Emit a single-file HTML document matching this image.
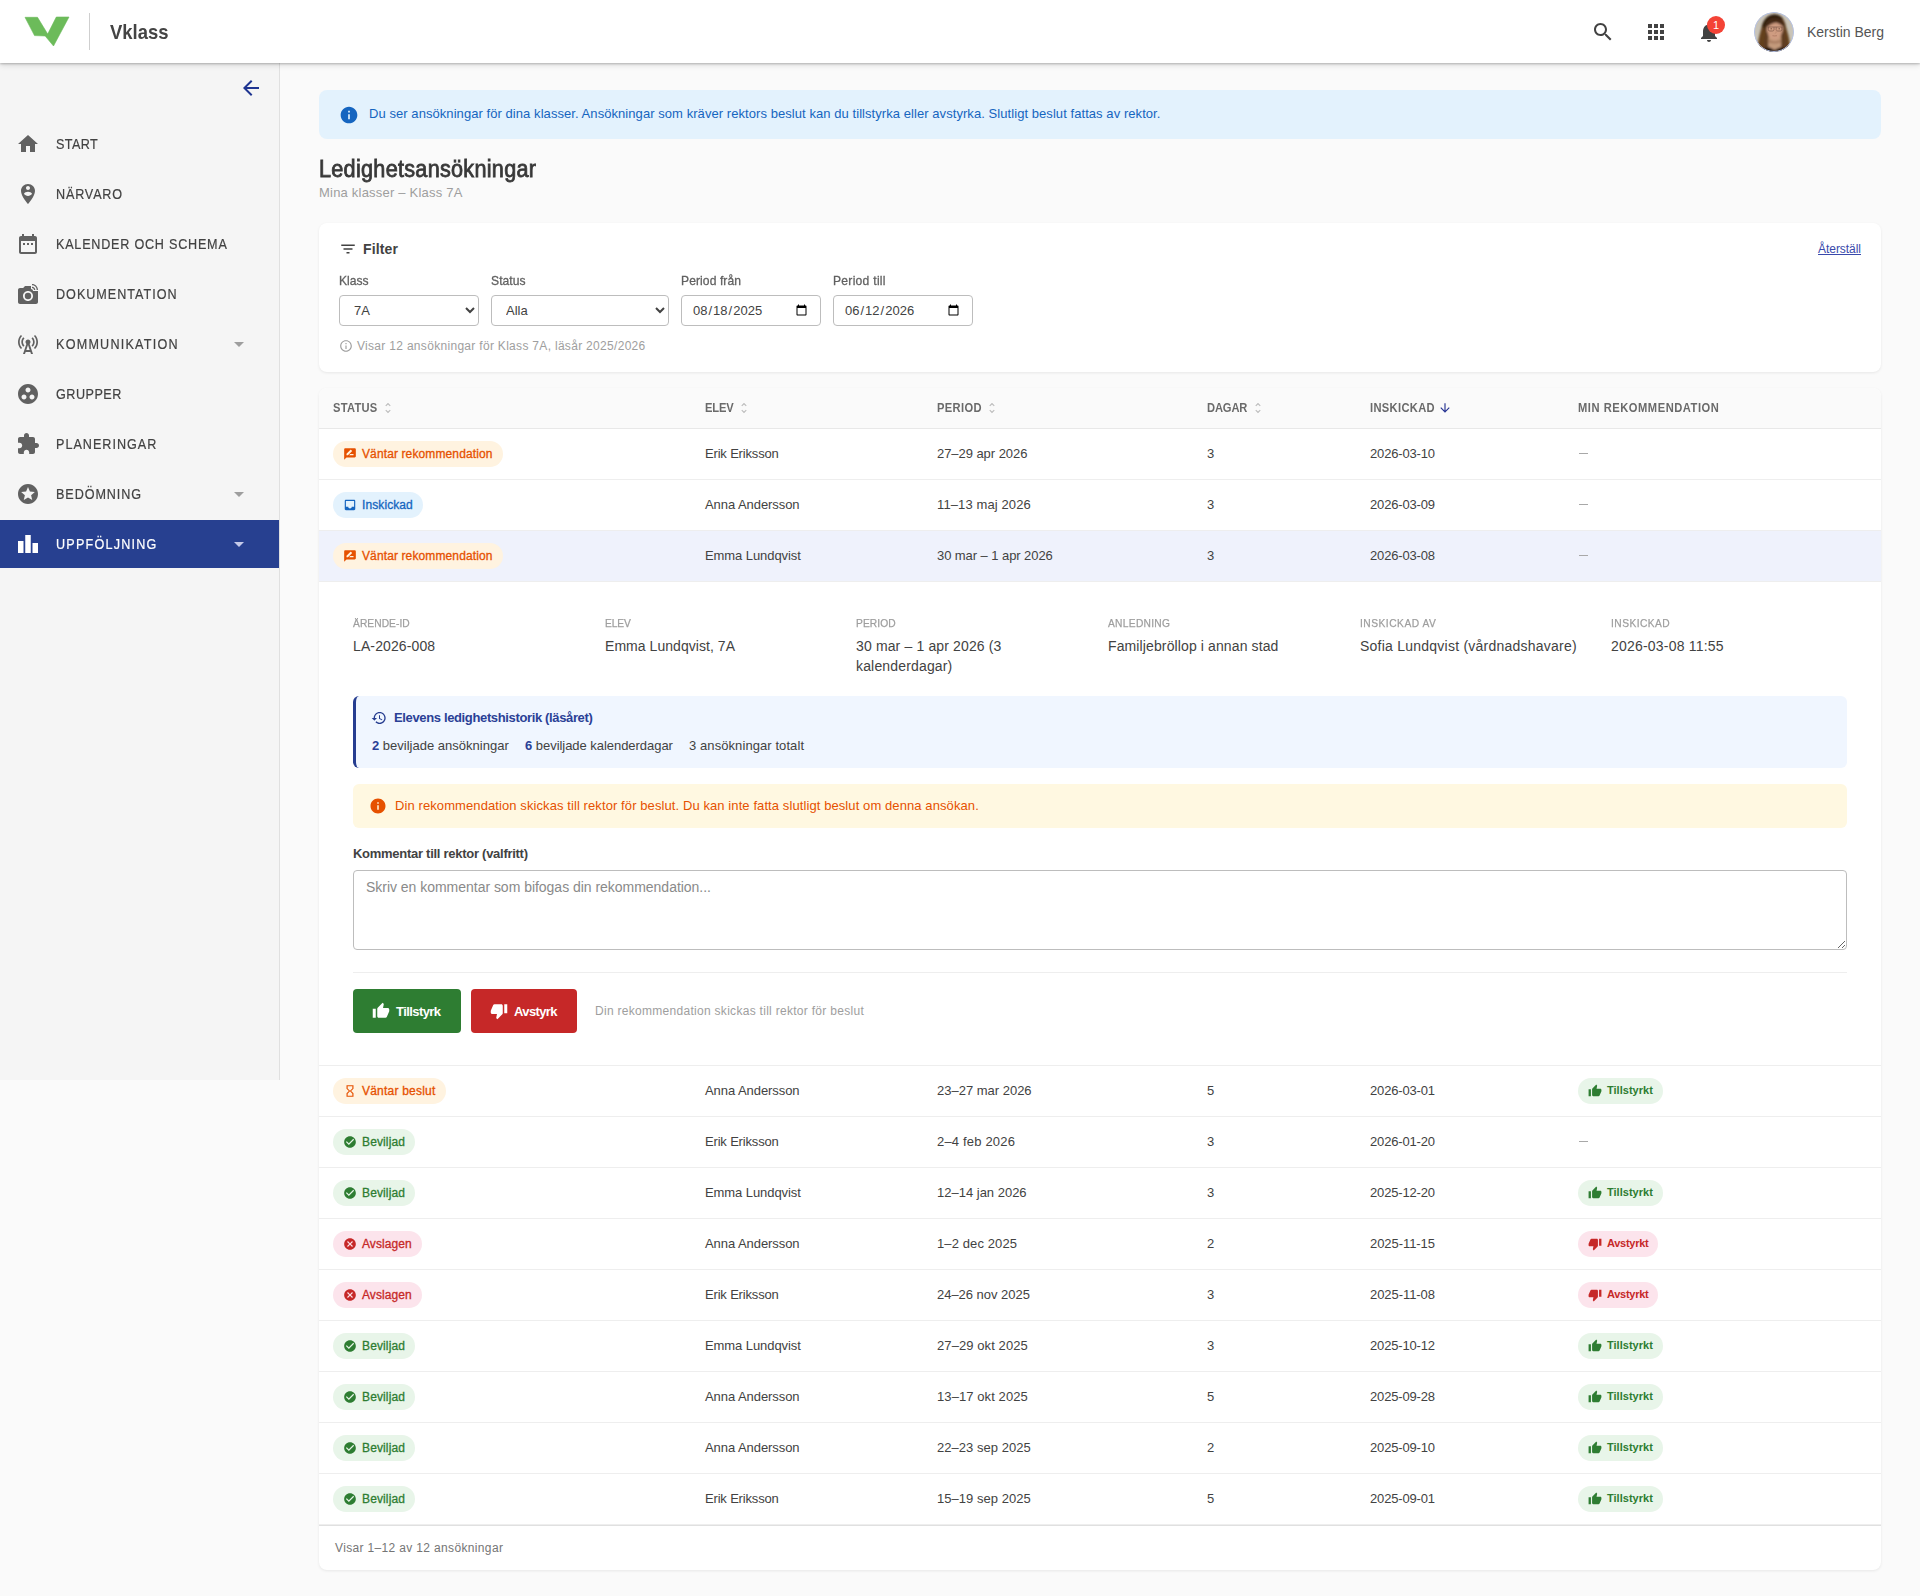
<!DOCTYPE html>
<html lang="sv">
<head>
<meta charset="utf-8">
<title>Ledighetsansökningar</title>
<style>
*{box-sizing:border-box;margin:0;padding:0}
html,body{width:1920px;height:1596px;overflow:hidden}
body{font-family:"Liberation Sans",sans-serif;background:#fafafa;color:#424242;font-size:13px;position:relative}
svg{display:block}
#hdr{position:absolute;left:0;top:0;width:1920px;height:63px;background:#fff;box-shadow:0 1px 2px rgba(0,0,0,.22),0 2px 6px rgba(0,0,0,.13);z-index:5}
#logo{position:absolute;left:0;top:0}
#hdiv{position:absolute;left:89px;top:13px;width:1px;height:37px;background:#cfcfcf}
#brand{position:absolute;left:110px;top:20px;font-size:20.5px;font-weight:bold;color:#444;line-height:24px;white-space:nowrap;transform-origin:0 0;transform:scaleX(.9)}
.hic{position:absolute;top:20px;width:24px;height:24px;fill:#424242}
#badge{position:absolute;left:1707px;top:16px;width:18px;height:18px;border-radius:9px;background:#f44336;color:#fff;font-size:11px;line-height:18px;text-align:center}
#avatar{position:absolute;left:1754px;top:12px;width:40px;height:40px;border-radius:20px;overflow:hidden}
#uname{position:absolute;left:1807px;top:23px;font-size:14px;line-height:18px;color:#555;white-space:nowrap}
#side{position:absolute;left:0;top:63px;width:280px;height:1017px;background:#f5f5f5;border-right:1px solid #e0e0e0}
#back{position:absolute;left:239px;top:13px;width:24px;height:24px;fill:#1f3591}
.mi{position:absolute;left:0;width:279px;height:48px;color:#424242}
.mi svg.ic{position:absolute;left:16px;top:12px;width:24px;height:24px;fill:#616161}
.mi span{position:absolute;left:56px;top:15px;font-size:14px;line-height:18px;white-space:nowrap;-webkit-text-stroke:.2px currentColor}
.mi svg.dd{position:absolute;left:227px;top:12px;width:24px;height:24px;fill:#9e9e9e}
.mi.act{background:#274090;color:#fff}
.mi.act svg.ic{fill:#fff}
.mi.act svg.dd{fill:#c5cae9}
#main{position:absolute;left:319px;top:90px;width:1562px}
#info{height:49px;background:#e3f2fd;border-radius:8px;position:relative;color:#1565c0}
#info svg{position:absolute;left:20px;top:15px;width:20px;height:20px;fill:#1565c0}
#info span{position:absolute;left:50px;top:16px;font-size:13px;line-height:16px;white-space:nowrap}
h1{position:absolute;left:0;top:65px;font-size:23px;line-height:28px;font-weight:normal;color:#383838;-webkit-text-stroke:.8px #383838;white-space:nowrap}
.sub{position:absolute;left:0;top:95px;font-size:13px;line-height:16px;color:#9e9e9e;white-space:nowrap}
.card{background:#fff;border-radius:8px;box-shadow:0 1px 3px rgba(0,0,0,.08)}
#filter{position:absolute;left:0;top:133px;width:1562px;height:149px}
#filter .fh{position:absolute;left:20px;top:16px;height:20px}
#filter .fh svg{position:absolute;left:0;top:1px;width:18px;height:18px;fill:#424242}
#filter .fh span{position:absolute;left:24px;top:0;font-size:14px;line-height:20px;font-weight:bold;color:#424242}
.reset{position:absolute;right:20px;top:19px;font-size:12px;line-height:14px;color:#3949ab;text-decoration:underline;white-space:nowrap}
.fl{position:absolute;top:50px;font-size:13px;line-height:16px;color:#616161;-webkit-text-stroke:.3px #616161;white-space:nowrap}
.fc{position:absolute;top:72px;height:31px;border:1px solid #bdbdbd;border-radius:4px;background:#fff;font-family:"Liberation Sans",sans-serif;font-size:13px;color:#424242;padding:0 10px}
#fnote{position:absolute;left:20px;top:115px;height:16px;color:#9e9e9e;font-size:12px;line-height:16px;white-space:nowrap}
#fnote svg{position:absolute;left:0;top:1px;width:14px;height:14px;fill:#9e9e9e}
#fnote span{position:absolute;left:18px;top:0}
#tbl{position:absolute;left:0;top:298px;width:1562px;height:1182px;overflow:hidden}
.row{position:relative;height:51px;border-bottom:1px solid #eeeeee;width:1562px}
.row.hd{height:41px;background:#fafafa;border-bottom:1px solid #e8e8e8}
.row.sel{background:#eff2fc}
.c{position:absolute;top:0;height:100%;white-space:nowrap}
.row .c{line-height:50px;font-size:13px;color:#424242}
.row.hd .c{line-height:40px;font-size:12px;font-weight:bold;color:#6a6a6a}
.c1{left:14px}.c2{left:386px}.c3{left:618px}.c4{left:888px}.c5{left:1051px}.c6{left:1259px}
.srt{display:inline-block;vertical-align:middle;width:14px;height:14px;fill:#bdbdbd;margin-left:3.3px;margin-top:-1px}
.srt.on{fill:#283593}
.dash{display:inline-block;vertical-align:middle;width:9px;height:1px;background:#a8a8a8;margin-left:1px;margin-top:-3px}
.chip{display:inline-block;vertical-align:middle;height:26px;border-radius:13px;padding:0 10px 0 29px;font-size:12px;line-height:26px;position:relative;margin-top:-1px}
.chip svg{position:absolute;left:10px;top:6px;width:14px;height:14px}
.chip span{display:inline-block;-webkit-text-stroke:.3px currentColor}
.chip.or{background:#fff3e0;color:#e65100}.chip.or svg{fill:#e65100}
.chip.bl{background:#e3f2fd;color:#1565c0}.chip.bl svg{fill:#1565c0}
.chip.gr{background:#e8f5e9;color:#2e7d32}.chip.gr svg{fill:#2e7d32}
.chip.rd{background:#fce4ec;color:#c62828}.chip.rd svg{fill:#c62828}
.chip.sm{font-size:11px;font-weight:bold;line-height:25px}.chip.sm span{-webkit-text-stroke:0}
#det{position:relative;height:484px;border-bottom:1px solid #eeeeee;background:#fff}
.dl{position:absolute;top:34px;font-size:11px;line-height:14px;color:#9e9e9e;-webkit-text-stroke:.25px #9e9e9e;white-space:nowrap}
.dv{position:absolute;top:54px;font-size:14px;line-height:20px;color:#424242;white-space:nowrap}
#hist{position:absolute;left:34px;top:114px;width:1494px;height:72px;background:#f0f6ff;border-left:3px solid #263d90;border-radius:6px}
#hist svg{position:absolute;left:15px;top:14px;width:16px;height:16px;fill:#263d90}
#hist b.t{position:absolute;left:38px;top:14px;font-size:13px;line-height:16px;color:#2a4096;white-space:nowrap}
#hist .s{position:absolute;top:42px;font-size:13px;line-height:16px;color:#424242;white-space:nowrap}
#hist .s b{color:#2a4096}
#warn{position:absolute;left:34px;top:202px;width:1494px;height:44px;background:#fff8e1;border-radius:6px;color:#e65100}
#warn svg{position:absolute;left:16px;top:13px;width:18px;height:18px;fill:#e65100}
#warn span{position:absolute;left:42px;top:14px;font-size:13px;line-height:16px;white-space:nowrap}
.kl{position:absolute;left:34px;top:264px;font-size:13px;line-height:16px;font-weight:bold;color:#424242;white-space:nowrap}
#ta{position:absolute;left:34px;top:288px;width:1494px;height:80px;border:1px solid #bdbdbd;border-radius:4px;padding:7px 12px;font-family:"Liberation Sans",sans-serif;font-size:14px;line-height:18px;color:#424242;background:#fff;resize:vertical}
#ta::placeholder{color:#8a8a8a}
#hr{position:absolute;left:34px;top:390px;width:1494px;height:1px;background:#eeeeee}
.btn{position:absolute;top:407px;height:44px;border-radius:4px;color:#fff;font-size:13px;font-weight:bold;line-height:44px;white-space:nowrap}
.btn svg{position:absolute;left:19px;top:13px;width:18px;height:18px;fill:#fff}
.btn span{position:absolute;left:43px;top:1px}
.hint{position:absolute;left:276px;top:421px;font-size:12px;line-height:16px;color:#9e9e9e;white-space:nowrap}
#foot{position:relative;height:46px;border-top:1px solid #e0e0e0;font-size:12px;line-height:44px;color:#757575;padding-left:16px}
</style>
</head>
<body>
<div id="hdr">
<svg id="logo" width="90" height="63" viewBox="0 0 90 63"><polygon points="25,17.300 37.500,17.300 47.700,34 56.300,17 69,17 53.500,46 45.200,36 34.500,35.600" fill="#6cbb5a" stroke="#6cbb5a" stroke-width=".6" stroke-linejoin="round"/></svg>
<div id="hdiv"></div>
<div id="brand">Vklass</div>
<svg class="hic" style="left:1591px" viewBox="0 0 24 24"><path d="M15.5 14h-.79l-.28-.27C15.41 12.59 16 11.11 16 9.5 16 5.91 13.09 3 9.5 3S3 5.91 3 9.5 5.91 16 9.5 16c1.61 0 3.09-.59 4.23-1.57l.27.28v.79l5 4.99L20.49 19l-4.99-5zm-6 0C7.01 14 5 11.99 5 9.5S7.01 5 9.5 5 14 7.01 14 9.5 11.99 14 9.5 14z"/></svg>
<svg class="hic" style="left:1644px" viewBox="0 0 24 24"><path d="M4 8h4V4H4v4zm6 12h4v-4h-4v4zm-6 0h4v-4H4v4zm0-6h4v-4H4v4zm6 0h4v-4h-4v4zm6-10v4h4V4h-4zm-6 4h4V4h-4v4zm6 6h4v-4h-4v4zm0 6h4v-4h-4v4z"/></svg>
<svg class="hic" style="left:1697px" viewBox="0 0 24 24"><path d="M12 22c1.1 0 2-.9 2-2h-4c0 1.1.89 2 2 2zm6-6v-5c0-3.07-1.64-5.64-4.5-6.32V4c0-.83-.67-1.5-1.5-1.5s-1.500.670-1.500 1.500v.680C7.630 5.360 6 7.920 6 11v5l-2 2v1h16v-1l-2-2z"/></svg>
<div id="badge">1</div>
<div id="avatar"><svg width="40" height="40" viewBox="0 0 40 40"><defs><filter id="bl" x="-20%" y="-20%" width="140%" height="140%"><feGaussianBlur stdDeviation="0.85"/></filter><clipPath id="cc"><circle cx="20" cy="20" r="20"/></clipPath></defs><g clip-path="url(#cc)"><rect width="40" height="40" fill="#c9c4b8"/><g filter="url(#bl)"><path d="M4 42C3 31 5.500 23 7.500 16 8.500 8 14 2.600 20.500 2.600 27 2.600 31 8 32 15c2 7 5 15 3.500 27z" fill="#64401f"/><path d="M8 17C8.500 8 14 2.600 20.500 2.600c4 0 7 2 9 5-4-1-8-1-11 1-4 2-7.500 5-10.500 8.400z" fill="#2b1c0e"/><path d="M14.500 25h12.500l.5 15h-13.500z" fill="#c39a7b"/><path d="M15 27.500q5.700 3.500 11.500 0l0 3q-5.800 2-11.500 0z" fill="#a87c60"/><path d="M12.400 17C12.400 11 16 9 20.700 9 26 9 29.200 11.500 29.200 17 29.200 23 25 28 20.700 28 16.500 28 12.400 23 12.400 17z" fill="#cf9c81"/><path d="M10.500 18C10.500 9 15 5.500 21 5.500c6 0 9.800 3.500 9.800 11-2.500-3-5-4.800-8.500-6-4.300.5-8.500 3-11.800 7.500z" fill="#452a15"/><path d="M12.600 13c-2 8-1.500 15-5 28l7-1c-2.500-6-2.800-13-1.500-19zM29 13c2.500 8 2 16 5.500 28l-7.500-1c2.500-6 3-13 1.500-19z" fill="#5e3d22"/><path d="M13 20c.5 6 1 13-.5 20l2.500-.5c-1.500-6-2-12-1-18zM28.500 20c-.5 6-1 13 .5 20l-2.500-.5c1.500-6 2-12 1-18z" fill="#3a2413"/><path d="M5 42c2-5 7-6.500 11-6.500l4.500 2.500 5-2.500c4 0 9 1.500 10.500 6.500z" fill="#1e0c06"/></g><g opacity=".55"><path d="M13.800 15h14.600M14.300 15v2.500q0 1.500 1.500 1.500h2.700q1.500 0 1.500-1.500V15M22.200 15v2.500q0 1.500 1.500 1.500h2.700q1.500 0 1.500-1.500V15" stroke="#4e342b" stroke-width=".8" fill="none"/><circle cx="17.200" cy="16.700" r=".7" fill="#3a2418"/><circle cx="25.200" cy="16.700" r=".7" fill="#3a2418"/><path d="M18.500 23.700q2.300.5 4.500 0" stroke="#8f5a48" stroke-width=".8" fill="none"/><path d="M21.800 17c.8 2 .6 3.500-.6 4.600" stroke="#a87660" stroke-width=".8" fill="none"/></g></g><circle cx="20" cy="20" r="19.500" fill="none" stroke="#b4c3ea" stroke-width="1"/></svg></div>
<div id="uname">Kerstin Berg</div>
</div>
<div id="side">
<svg id="back" viewBox="0 0 24 24"><path d="M20 11H7.83l5.590-5.590L12 4l-8 8 8 8 1.410-1.410L7.830 13H20v-2z"/></svg>
<div class="mi" style="top:57px"><svg class="ic" viewBox="0 0 24 24"><path d="M10 20v-6h4v6h5v-8h3L12 3 2 12h3v8z"/></svg><span style="letter-spacing:0.462px;display:inline-block;transform-origin:0 50%;transform:scaleX(0.9);margin-right:-4.64px">START</span></div>
<div class="mi" style="top:107px"><svg class="ic" viewBox="0 0 24 24"><path d="M12 2C8.14 2 5 5.14 5 9c0 5.25 7 13 7 13s7-7.75 7-13c0-3.86-3.14-7-7-7zm0 2c1.1 0 2 .9 2 2 0 1.11-.9 2-2 2s-2-.89-2-2c0-1.1.9-2 2-2zm0 10c-1.67 0-3.14-.85-4-2.150.020-1.320 2.670-2.050 4-2.050s3.980.730 4 2.050c-.860 1.300-2.330 2.150-4 2.150z"/></svg><span style="letter-spacing:0.917px;display:inline-block;transform-origin:0 50%;transform:scaleX(0.9);margin-right:-7.34px">NÄRVARO</span></div>
<div class="mi" style="top:157px"><svg class="ic" viewBox="0 0 24 24"><path d="M9 11H7v2h2v-2zm4 0h-2v2h2v-2zm4 0h-2v2h2v-2zm2-7h-1V2h-2v2H8V2H6v2H5c-1.110 0-1.990.900-1.990 2L3 20c0 1.100.890 2 2 2h14c1.100 0 2-.900 2-2V6c0-1.100-.900-2-2-2zm0 16H5V9h14v11z"/></svg><span style="letter-spacing:0.862px;display:inline-block;transform-origin:0 50%;transform:scaleX(0.9);margin-right:-18.98px">KALENDER OCH SCHEMA</span></div>
<div class="mi" style="top:207px"><svg class="ic" viewBox="0 0 24 24"><path d="M12 10.800a3.200 3.200 0 1 0 0 6.400 3.200 3.200 0 1 0 0-6.400zM16 3.330c2.580 0 4.670 2.090 4.670 4.670H22c0-3.310-2.690-6-6-6v1.330M16 6c1.110 0 2 .890 2 2h1.330c0-1.840-1.490-3.330-3.330-3.330V6M17 9c0-1.110-.890-2-2-2V4H9L7.170 6H4c-1.100 0-2 .900-2 2v12c0 1.100.900 2 2 2h16c1.100 0 2-.900 2-2V9h-5zm-5 10c-2.760 0-5-2.240-5-5s2.240-5 5-5 5 2.240 5 5-2.240 5-5 5z"/></svg><span style="letter-spacing:1.099px;display:inline-block;transform-origin:0 50%;transform:scaleX(0.9);margin-right:-13.40px">DOKUMENTATION</span></div>
<div class="mi" style="top:257px"><svg class="ic" viewBox="0 0 24 24"><path d="M7.300 14.700l1.200-1.200c-1-1-1.500-2.300-1.500-3.500 0-1.300.500-2.600 1.500-3.500L7.300 5.300c-1.300 1.300-2 3-2 4.700s.700 3.400 2 4.700zM19.100 2.900l-1.200 1.200c1.600 1.600 2.400 3.800 2.400 5.900 0 2.100-.800 4.300-2.400 5.900l1.200 1.200c2-2 2.900-4.500 2.900-7.100 0-2.600-1-5.100-2.900-7.100zM6.100 4.100L4.900 2.900C3 4.900 2 7.400 2 10c0 2.600 1 5.100 2.900 7.100l1.200-1.200c-1.600-1.600-2.400-3.800-2.400-5.900 0-2.100.800-4.300 2.400-5.900zM16.700 14.700c1.300-1.300 2-3 2-4.700-.100-1.700-.700-3.400-2-4.700l-1.200 1.200c1 1 1.500 2.300 1.500 3.500 0 1.300-.500 2.600-1.500 3.500l1.200 1.200zM14.500 10c0-1.380-1.120-2.500-2.500-2.500S9.500 8.620 9.500 10c0 .760.340 1.420.870 1.880L7 22h2l.670-2h4.670l.660 2h2l-3.370-10.120c.530-.460.870-1.120.870-1.880zm-4.170 8L12 13l1.670 5h-3.340z"/></svg><span style="letter-spacing:1.364px;display:inline-block;transform-origin:0 50%;transform:scaleX(0.9);margin-right:-13.51px">KOMMUNIKATION</span><svg class="dd" viewBox="0 0 24 24"><path d="M7 10l5 5 5-5z"/></svg></div>
<div class="mi" style="top:307px"><svg class="ic" viewBox="0 0 24 24"><path d="M12 2C6.480 2 2 6.480 2 12s4.480 10 10 10 10-4.480 10-10S17.520 2 12 2zM8 17.500c-1.380 0-2.500-1.120-2.500-2.500s1.120-2.500 2.500-2.500 2.500 1.120 2.500 2.500-1.120 2.500-2.500 2.500zM9.500 8c0-1.380 1.120-2.500 2.500-2.500s2.500 1.120 2.500 2.500-1.120 2.500-2.500 2.500S9.500 9.380 9.500 8zm6.500 9.500c-1.380 0-2.500-1.120-2.500-2.500s1.120-2.500 2.500-2.500 2.500 1.120 2.500 2.500-1.120 2.500-2.500 2.500z"/></svg><span style="letter-spacing:0.553px;display:inline-block;transform-origin:0 50%;transform:scaleX(0.9);margin-right:-7.26px">GRUPPER</span></div>
<div class="mi" style="top:357px"><svg class="ic" viewBox="0 0 24 24"><path d="M20.500 11H19V7c0-1.100-.900-2-2-2h-4V3.500C13 2.120 11.880 1 10.500 1S8 2.120 8 3.500V5H4c-1.100 0-1.990.900-1.990 2v3.800H3.500c1.490 0 2.700 1.210 2.700 2.700s-1.210 2.700-2.700 2.700H2V20c0 1.100.900 2 2 2h3.800v-1.500c0-1.490 1.210-2.700 2.700-2.700 1.490 0 2.700 1.210 2.700 2.700V22H17c1.100 0 2-.900 2-2v-4h1.500c1.380 0 2.500-1.120 2.500-2.500S21.880 11 20.500 11z"/></svg><span style="letter-spacing:1.109px;display:inline-block;transform-origin:0 50%;transform:scaleX(0.9);margin-right:-11.14px">PLANERINGAR</span></div>
<div class="mi" style="top:407px"><svg class="ic" viewBox="0 0 24 24"><path d="M11.990 2C6.470 2 2 6.480 2 12s4.470 10 9.990 10C17.520 22 22 17.520 22 12S17.520 2 11.990 2zm4.240 16L12 15.450 7.770 18l1.120-4.810-3.730-3.230 4.920-.420L12 5l1.920 4.530 4.920.420-3.730 3.230L16.230 18z"/></svg><span style="letter-spacing:1.027px;display:inline-block;transform-origin:0 50%;transform:scaleX(0.9);margin-right:-9.46px">BEDÖMNING</span><svg class="dd" viewBox="0 0 24 24"><path d="M7 10l5 5 5-5z"/></svg></div>
<div class="mi act" style="top:457px"><svg class="ic" viewBox="0 0 24 24"><path d="M7.5 21H2V9h5.5v12zm7.250-18h-5.500v18h5.500V3zM22 11h-5.500v10H22V11z"/></svg><span style="letter-spacing:1.343px;display:inline-block;transform-origin:0 50%;transform:scaleX(0.9);margin-right:-11.14px">UPPFÖLJNING</span><svg class="dd" viewBox="0 0 24 24"><path d="M7 10l5 5 5-5z"/></svg></div>
</div>
<div id="main">
<div id="info"><svg viewBox="0 0 24 24"><path d="M12 2C6.480 2 2 6.480 2 12s4.480 10 10 10 10-4.480 10-10S17.520 2 12 2zm1 15h-2v-6h2v6zm0-8h-2V7h2v2z"/></svg><span style="letter-spacing:0.063px">Du ser ansökningar för dina klasser. Ansökningar som kräver rektors beslut kan du tillstyrka eller avstyrka. Slutligt beslut fattas av rektor.</span></div>
<h1 style="letter-spacing:0.305px;display:inline-block;transform-origin:0 50%;transform:scaleX(0.94);margin-right:-13.85px">Ledighetsansökningar</h1>
<div class="sub" style="letter-spacing:0.208px">Mina klasser – Klass 7A</div>
<div id="filter" class="card">
<div class="fh"><svg viewBox="0 0 24 24"><path d="M10 18h4v-2h-4v2zM3 6v2h18V6H3zm3 7h12v-2H6v2z"/></svg><span style="letter-spacing:0.154px">Filter</span></div>
<div class="reset" style="letter-spacing:-0.043px">Återställ</div>
<div class="fl" style="letter-spacing:0.010px;display:inline-block;transform-origin:0 50%;transform:scaleX(0.93);margin-right:-2.23px;left:20px">Klass</div>
<div class="fl" style="letter-spacing:0.070px;display:inline-block;transform-origin:0 50%;transform:scaleX(0.93);margin-right:-2.60px;left:172px">Status</div>
<div class="fl" style="letter-spacing:0.092px;display:inline-block;transform-origin:0 50%;transform:scaleX(0.93);margin-right:-4.52px;left:362px">Period från</div>
<div class="fl" style="letter-spacing:0.298px;display:inline-block;transform-origin:0 50%;transform:scaleX(0.93);margin-right:-3.95px;left:514px">Period till</div>
<select class="fc" style="left:20px;width:140px"><option>7A</option></select>
<select class="fc" style="left:172px;width:178px"><option>Alla</option></select>
<input class="fc" type="date" value="2025-08-18" style="left:362px;width:140px">
<input class="fc" type="date" value="2026-06-12" style="left:514px;width:140px">
<div id="fnote"><svg viewBox="0 0 24 24"><path d="M11 17h2v-6h-2v6zm1-15C6.480 2 2 6.480 2 12s4.480 10 10 10 10-4.480 10-10S17.520 2 12 2zm0 18c-4.410 0-8-3.590-8-8s3.590-8 8-8 8 3.590 8 8-3.590 8-8 8zM11 9h2V7h-2v2z"/></svg><span style="letter-spacing:0.306px">Visar 12 ansökningar för Klass 7A, läsår 2025/2026</span></div>
</div>
<div id="tbl" class="card">
<div class="row hd"><div class="c c1"><span style="letter-spacing:0.262px;display:inline-block;transform-origin:0 50%;transform:scaleX(0.93);margin-right:-3.33px">STATUS</span><svg class="srt" viewBox="0 0 24 24"><path d="M12 5.830L15.170 9l1.410-1.410L12 3 7.410 7.590 8.830 9 12 5.830zm0 12.340L8.830 15l-1.410 1.410L12 21l4.590-4.590L15.170 15 12 18.170z"/></svg></div><div class="c c2"><span style="letter-spacing:-0.143px;display:inline-block;transform-origin:0 50%;transform:scaleX(0.93);margin-right:-2.16px">ELEV</span><svg class="srt" viewBox="0 0 24 24"><path d="M12 5.830L15.170 9l1.410-1.410L12 3 7.410 7.590 8.830 9 12 5.830zm0 12.340L8.830 15l-1.410 1.410L12 21l4.590-4.590L15.170 15 12 18.170z"/></svg></div><div class="c c3"><span style="letter-spacing:0.390px;display:inline-block;transform-origin:0 50%;transform:scaleX(0.93);margin-right:-3.36px">PERIOD</span><svg class="srt" viewBox="0 0 24 24"><path d="M12 5.830L15.170 9l1.410-1.410L12 3 7.410 7.590 8.830 9 12 5.830zm0 12.340L8.830 15l-1.410 1.410L12 21l4.590-4.590L15.170 15 12 18.170z"/></svg></div><div class="c c4"><span style="letter-spacing:-0.139px;display:inline-block;transform-origin:0 50%;transform:scaleX(0.93);margin-right:-3.04px">DAGAR</span><svg class="srt" viewBox="0 0 24 24"><path d="M12 5.830L15.170 9l1.410-1.410L12 3 7.410 7.590 8.830 9 12 5.830zm0 12.340L8.830 15l-1.410 1.410L12 21l4.590-4.590L15.170 15 12 18.170z"/></svg></div><div class="c c5"><span style="letter-spacing:0.349px;display:inline-block;transform-origin:0 50%;transform:scaleX(0.93);margin-right:-4.86px">INSKICKAD</span><svg class="srt on" viewBox="0 0 24 24"><path d="M20 12l-1.410-1.410L13 16.170V4h-2v12.170l-5.580-5.590L4 12l8 8 8-8z"/></svg></div><div class="c c6"><span style="letter-spacing:0.566px;display:inline-block;transform-origin:0 50%;transform:scaleX(0.93);margin-right:-10.60px">MIN REKOMMENDATION</span></div></div>
<div class="row"><div class="c c1"><span class="chip or"><svg viewBox="0 0 24 24"><path d="M20 2H4c-1.100 0-1.990.900-1.990 2L2 22l4-4h14c1.100 0 2-.900 2-2V4c0-1.100-.900-2-2-2zM6 14v-2.470l6.880-6.880c.2-.2.510-.2.710 0l1.770 1.770c.2.2.2.510 0 .710L8.470 14H6zm12 0h-7.500l2-2H18v2z"/></svg><span style="letter-spacing:0.117px">Väntar rekommendation</span></span></div><div class="c c2"><span style="letter-spacing:-0.175px">Erik Eriksson</span></div><div class="c c3"><span style="letter-spacing:-0.053px">27–29 apr 2026</span></div><div class="c c4">3</div><div class="c c5"><span style="letter-spacing:-0.167px">2026-03-10</span></div><div class="c c6"><span class="dash"></span></div></div>
<div class="row"><div class="c c1"><span class="chip bl"><svg viewBox="0 0 24 24"><path d="M19 3H4.990c-1.110 0-1.980.890-1.980 2L3 19c0 1.100.880 2 1.990 2H19c1.100 0 2-.900 2-2V5c0-1.110-.900-2-2-2zm0 12h-4c0 1.660-1.350 3-3 3s-3-1.340-3-3H4.990V5H19v10z"/></svg><span style="letter-spacing:0.097px">Inskickad</span></span></div><div class="c c2"><span style="letter-spacing:-0.062px">Anna Andersson</span></div><div class="c c3"><span style="letter-spacing:0.113px">11–13 maj 2026</span></div><div class="c c4">3</div><div class="c c5"><span style="letter-spacing:-0.167px">2026-03-09</span></div><div class="c c6"><span class="dash"></span></div></div>
<div class="row sel"><div class="c c1"><span class="chip or"><svg viewBox="0 0 24 24"><path d="M20 2H4c-1.100 0-1.990.900-1.990 2L2 22l4-4h14c1.100 0 2-.900 2-2V4c0-1.100-.900-2-2-2zM6 14v-2.470l6.880-6.880c.2-.2.510-.2.710 0l1.770 1.770c.2.2.2.510 0 .710L8.470 14H6zm12 0h-7.500l2-2H18v2z"/></svg><span style="letter-spacing:0.117px">Väntar rekommendation</span></span></div><div class="c c2"><span style="letter-spacing:-0.079px">Emma Lundqvist</span></div><div class="c c3"><span style="letter-spacing:-0.071px">30 mar – 1 apr 2026</span></div><div class="c c4">3</div><div class="c c5"><span style="letter-spacing:-0.167px">2026-03-08</span></div><div class="c c6"><span class="dash"></span></div></div>
<div id="det">
<div class="dl" style="letter-spacing:0.058px;display:inline-block;transform-origin:0 50%;transform:scaleX(0.93);margin-right:-4.27px;left:34px">ÄRENDE-ID</div><div class="dv" style="left:34px"><span style="letter-spacing:0.115px">LA-2026-008</span></div>
<div class="dl" style="letter-spacing:-0.129px;display:inline-block;transform-origin:0 50%;transform:scaleX(0.93);margin-right:-1.94px;left:286px">ELEV</div><div class="dv" style="left:286px"><span style="letter-spacing:0.049px">Emma Lundqvist, 7A</span></div>
<div class="dl" style="letter-spacing:0.081px;display:inline-block;transform-origin:0 50%;transform:scaleX(0.93);margin-right:-2.98px;left:537px">PERIOD</div><div class="dv" style="left:537px"><span style="letter-spacing:0.142px">30 mar – 1 apr 2026 (3</span><br><span style="letter-spacing:0.160px">kalenderdagar)</span></div>
<div class="dl" style="letter-spacing:0.311px;display:inline-block;transform-origin:0 50%;transform:scaleX(0.93);margin-right:-4.67px;left:789px">ANLEDNING</div><div class="dv" style="left:789px"><span style="letter-spacing:0.119px">Familjebröllop i annan stad</span></div>
<div class="dl" style="letter-spacing:0.537px;display:inline-block;transform-origin:0 50%;transform:scaleX(0.93);margin-right:-5.71px;left:1041px">INSKICKAD AV</div><div class="dv" style="left:1041px"><span style="letter-spacing:0.237px">Sofia Lundqvist (vårdnadshavare)</span></div>
<div class="dl" style="letter-spacing:0.485px;display:inline-block;transform-origin:0 50%;transform:scaleX(0.93);margin-right:-4.42px;left:1292px">INSKICKAD</div><div class="dv" style="left:1292px"><span style="letter-spacing:0.200px">2026-03-08 11:55</span></div>
<div id="hist"><svg viewBox="0 0 24 24"><path d="M13 3c-4.970 0-9 4.030-9 9H1l3.890 3.890.07.14L9 12H6c0-3.870 3.130-7 7-7s7 3.130 7 7-3.130 7-7 7c-1.930 0-3.680-.790-4.940-2.060l-1.420 1.420C8.270 19.990 10.510 21 13 21c4.970 0 9-4.030 9-9s-4.030-9-9-9zm-1 5v5l4.280 2.540.72-1.210-3.500-2.080V8H12z"/></svg><b class="t" style="letter-spacing:-0.359px">Elevens ledighetshistorik (läsåret)</b>
<div class="s" style="left:16px"><b>2</b><span style="letter-spacing:0.006px"> beviljade ansökningar</span></div><div class="s" style="left:169px"><b>6</b><span style="letter-spacing:-0.042px"> beviljade kalenderdagar</span></div><div class="s" style="left:333px"><span style="letter-spacing:0.081px">3 ansökningar totalt</span></div></div>
<div id="warn"><svg viewBox="0 0 24 24"><path d="M12 2C6.480 2 2 6.480 2 12s4.480 10 10 10 10-4.480 10-10S17.520 2 12 2zm1 15h-2v-6h2v6zm0-8h-2V7h2v2z"/></svg><span style="letter-spacing:0.092px">Din rekommendation skickas till rektor för beslut. Du kan inte fatta slutligt beslut om denna ansökan.</span></div>
<div class="kl" style="letter-spacing:-0.273px">Kommentar till rektor (valfritt)</div>
<textarea id="ta" style="letter-spacing:-0.025px" placeholder="Skriv en kommentar som bifogas din rekommendation..."></textarea>
<div id="hr"></div>
<div class="btn" style="left:34px;width:108px;background:#2e7d32"><svg viewBox="0 0 24 24"><path d="M1 21h4V9H1v12zm22-11c0-1.100-.900-2-2-2h-6.310l.95-4.570.03-.32c0-.410-.170-.790-.440-1.060L14.170 1 7.590 7.590C7.220 7.950 7 8.450 7 9v10c0 1.100.900 2 2 2h9c.830 0 1.540-.500 1.840-1.220l3.020-7.050c.09-.230.140-.470.140-.730v-2z"/></svg><span style="letter-spacing:-0.577px">Tillstyrk</span></div>
<div class="btn" style="left:152px;width:106px;background:#c62828"><svg viewBox="0 0 24 24"><path d="M15 3H6c-.830 0-1.540.500-1.840 1.220l-3.020 7.050c-.09.230-.140.470-.140.730v2c0 1.100.900 2 2 2h6.310l-.95 4.570-.03.320c0 .410.170.790.440 1.060L9.830 23l6.590-6.590c.36-.36.580-.860.580-1.410V5c0-1.100-.900-2-2-2zm4 0v12h4V3h-4z"/></svg><span style="letter-spacing:-0.619px">Avstyrk</span></div>
<div class="hint" style="letter-spacing:0.291px">Din rekommendation skickas till rektor för beslut</div>
</div>
<div class="row"><div class="c c1"><span class="chip or"><svg viewBox="0 0 24 24"><path d="M6 2v6h.010L6 8.010 10 12l-4 4 .010.010H6V22h12v-5.990h-.010L18 16l-4-4 4-3.990-.010-.010H18V2H6zm10 14.500V20H8v-3.500l4-4 4 4zm-4-5l-4-4V4h8v3.500l-4 4z"/></svg><span style="letter-spacing:0.216px">Väntar beslut</span></span></div><div class="c c2"><span style="letter-spacing:-0.062px">Anna Andersson</span></div><div class="c c3"><span style="letter-spacing:-0.006px">23–27 mar 2026</span></div><div class="c c4">5</div><div class="c c5"><span style="letter-spacing:-0.167px">2026-03-01</span></div><div class="c c6"><span class="chip gr sm"><svg viewBox="0 0 24 24"><path d="M1 21h4V9H1v12zm22-11c0-1.100-.900-2-2-2h-6.310l.95-4.570.03-.32c0-.410-.170-.790-.440-1.060L14.170 1 7.590 7.590C7.220 7.950 7 8.450 7 9v10c0 1.100.900 2 2 2h9c.830 0 1.540-.500 1.840-1.220l3.020-7.050c.09-.230.140-.470.140-.730v-2z"/></svg><span style="letter-spacing:0.017px">Tillstyrkt</span></span></div></div>
<div class="row"><div class="c c1"><span class="chip gr"><svg viewBox="0 0 24 24"><path d="M12 2C6.480 2 2 6.480 2 12s4.480 10 10 10 10-4.480 10-10S17.520 2 12 2zm-2 15l-5-5 1.410-1.410L10 14.170l7.590-7.590L19 8l-9 9z"/></svg><span style="letter-spacing:0.125px">Beviljad</span></span></div><div class="c c2"><span style="letter-spacing:-0.175px">Erik Eriksson</span></div><div class="c c3"><span style="letter-spacing:0.181px">2–4 feb 2026</span></div><div class="c c4">3</div><div class="c c5"><span style="letter-spacing:-0.167px">2026-01-20</span></div><div class="c c6"><span class="dash"></span></div></div>
<div class="row"><div class="c c1"><span class="chip gr"><svg viewBox="0 0 24 24"><path d="M12 2C6.480 2 2 6.480 2 12s4.480 10 10 10 10-4.480 10-10S17.520 2 12 2zm-2 15l-5-5 1.410-1.410L10 14.170l7.590-7.590L19 8l-9 9z"/></svg><span style="letter-spacing:0.125px">Beviljad</span></span></div><div class="c c2"><span style="letter-spacing:-0.079px">Emma Lundqvist</span></div><div class="c c3"><span style="letter-spacing:-0.003px">12–14 jan 2026</span></div><div class="c c4">3</div><div class="c c5"><span style="letter-spacing:-0.167px">2025-12-20</span></div><div class="c c6"><span class="chip gr sm"><svg viewBox="0 0 24 24"><path d="M1 21h4V9H1v12zm22-11c0-1.100-.900-2-2-2h-6.310l.95-4.570.03-.32c0-.410-.170-.790-.440-1.060L14.170 1 7.590 7.590C7.220 7.950 7 8.450 7 9v10c0 1.100.900 2 2 2h9c.830 0 1.540-.500 1.840-1.220l3.020-7.050c.09-.230.140-.470.140-.730v-2z"/></svg><span style="letter-spacing:0.017px">Tillstyrkt</span></span></div></div>
<div class="row"><div class="c c1"><span class="chip rd"><svg viewBox="0 0 24 24"><path d="M12 2C6.470 2 2 6.470 2 12s4.470 10 10 10 10-4.470 10-10S17.530 2 12 2zm5 13.590L15.590 17 12 13.410 8.410 17 7 15.590 10.590 12 7 8.410 8.410 7 12 10.590 15.590 7 17 8.410 13.410 12 17 15.590z"/></svg><span style="letter-spacing:0.064px">Avslagen</span></span></div><div class="c c2"><span style="letter-spacing:-0.062px">Anna Andersson</span></div><div class="c c3"><span style="letter-spacing:0.110px">1–2 dec 2025</span></div><div class="c c4">2</div><div class="c c5"><span style="letter-spacing:-0.059px">2025-11-15</span></div><div class="c c6"><span class="chip rd sm"><svg viewBox="0 0 24 24"><path d="M15 3H6c-.830 0-1.540.500-1.840 1.220l-3.020 7.050c-.09.230-.140.470-.140.730v2c0 1.100.900 2 2 2h6.310l-.95 4.570-.03.320c0 .410.170.790.440 1.060L9.830 23l6.590-6.590c.36-.36.580-.860.580-1.410V5c0-1.100-.900-2-2-2zm4 0v12h4V3h-4z"/></svg><span style="letter-spacing:-0.273px">Avstyrkt</span></span></div></div>
<div class="row"><div class="c c1"><span class="chip rd"><svg viewBox="0 0 24 24"><path d="M12 2C6.470 2 2 6.470 2 12s4.470 10 10 10 10-4.470 10-10S17.530 2 12 2zm5 13.590L15.590 17 12 13.410 8.410 17 7 15.590 10.590 12 7 8.410 8.410 7 12 10.590 15.590 7 17 8.410 13.410 12 17 15.590z"/></svg><span style="letter-spacing:0.064px">Avslagen</span></span></div><div class="c c2"><span style="letter-spacing:-0.175px">Erik Eriksson</span></div><div class="c c3"><span style="letter-spacing:-0.027px">24–26 nov 2025</span></div><div class="c c4">3</div><div class="c c5"><span style="letter-spacing:-0.059px">2025-11-08</span></div><div class="c c6"><span class="chip rd sm"><svg viewBox="0 0 24 24"><path d="M15 3H6c-.830 0-1.540.500-1.840 1.220l-3.020 7.050c-.09.230-.140.470-.140.730v2c0 1.100.900 2 2 2h6.310l-.95 4.570-.03.320c0 .410.170.790.440 1.060L9.830 23l6.590-6.590c.36-.36.580-.860.580-1.410V5c0-1.100-.900-2-2-2zm4 0v12h4V3h-4z"/></svg><span style="letter-spacing:-0.273px">Avstyrkt</span></span></div></div>
<div class="row"><div class="c c1"><span class="chip gr"><svg viewBox="0 0 24 24"><path d="M12 2C6.480 2 2 6.480 2 12s4.480 10 10 10 10-4.480 10-10S17.520 2 12 2zm-2 15l-5-5 1.410-1.410L10 14.170l7.590-7.590L19 8l-9 9z"/></svg><span style="letter-spacing:0.125px">Beviljad</span></span></div><div class="c c2"><span style="letter-spacing:-0.079px">Emma Lundqvist</span></div><div class="c c3"><span style="letter-spacing:0.090px">27–29 okt 2025</span></div><div class="c c4">3</div><div class="c c5"><span style="letter-spacing:-0.167px">2025-10-12</span></div><div class="c c6"><span class="chip gr sm"><svg viewBox="0 0 24 24"><path d="M1 21h4V9H1v12zm22-11c0-1.100-.900-2-2-2h-6.310l.95-4.570.03-.32c0-.410-.170-.790-.440-1.060L14.170 1 7.590 7.590C7.220 7.950 7 8.450 7 9v10c0 1.100.900 2 2 2h9c.830 0 1.540-.500 1.840-1.220l3.020-7.050c.09-.230.140-.470.140-.730v-2z"/></svg><span style="letter-spacing:0.017px">Tillstyrkt</span></span></div></div>
<div class="row"><div class="c c1"><span class="chip gr"><svg viewBox="0 0 24 24"><path d="M12 2C6.480 2 2 6.480 2 12s4.480 10 10 10 10-4.480 10-10S17.520 2 12 2zm-2 15l-5-5 1.410-1.410L10 14.170l7.590-7.590L19 8l-9 9z"/></svg><span style="letter-spacing:0.125px">Beviljad</span></span></div><div class="c c2"><span style="letter-spacing:-0.062px">Anna Andersson</span></div><div class="c c3"><span style="letter-spacing:0.090px">13–17 okt 2025</span></div><div class="c c4">5</div><div class="c c5"><span style="letter-spacing:-0.167px">2025-09-28</span></div><div class="c c6"><span class="chip gr sm"><svg viewBox="0 0 24 24"><path d="M1 21h4V9H1v12zm22-11c0-1.100-.900-2-2-2h-6.310l.95-4.570.03-.32c0-.410-.170-.790-.440-1.060L14.170 1 7.590 7.590C7.220 7.950 7 8.450 7 9v10c0 1.100.900 2 2 2h9c.830 0 1.540-.500 1.840-1.220l3.020-7.050c.09-.230.140-.470.140-.730v-2z"/></svg><span style="letter-spacing:0.017px">Tillstyrkt</span></span></div></div>
<div class="row"><div class="c c1"><span class="chip gr"><svg viewBox="0 0 24 24"><path d="M12 2C6.480 2 2 6.480 2 12s4.480 10 10 10 10-4.480 10-10S17.520 2 12 2zm-2 15l-5-5 1.410-1.410L10 14.170l7.590-7.590L19 8l-9 9z"/></svg><span style="letter-spacing:0.125px">Beviljad</span></span></div><div class="c c2"><span style="letter-spacing:-0.062px">Anna Andersson</span></div><div class="c c3"><span style="letter-spacing:0.038px">22–23 sep 2025</span></div><div class="c c4">2</div><div class="c c5"><span style="letter-spacing:-0.167px">2025-09-10</span></div><div class="c c6"><span class="chip gr sm"><svg viewBox="0 0 24 24"><path d="M1 21h4V9H1v12zm22-11c0-1.100-.900-2-2-2h-6.310l.95-4.570.03-.32c0-.410-.170-.790-.440-1.060L14.170 1 7.590 7.590C7.220 7.950 7 8.450 7 9v10c0 1.100.900 2 2 2h9c.830 0 1.540-.500 1.840-1.220l3.020-7.050c.09-.230.140-.470.140-.730v-2z"/></svg><span style="letter-spacing:0.017px">Tillstyrkt</span></span></div></div>
<div class="row"><div class="c c1"><span class="chip gr"><svg viewBox="0 0 24 24"><path d="M12 2C6.480 2 2 6.480 2 12s4.480 10 10 10 10-4.480 10-10S17.520 2 12 2zm-2 15l-5-5 1.410-1.410L10 14.170l7.590-7.590L19 8l-9 9z"/></svg><span style="letter-spacing:0.125px">Beviljad</span></span></div><div class="c c2"><span style="letter-spacing:-0.175px">Erik Eriksson</span></div><div class="c c3"><span style="letter-spacing:0.038px">15–19 sep 2025</span></div><div class="c c4">5</div><div class="c c5"><span style="letter-spacing:-0.167px">2025-09-01</span></div><div class="c c6"><span class="chip gr sm"><svg viewBox="0 0 24 24"><path d="M1 21h4V9H1v12zm22-11c0-1.100-.900-2-2-2h-6.310l.95-4.570.03-.32c0-.410-.170-.790-.440-1.060L14.170 1 7.590 7.590C7.220 7.950 7 8.450 7 9v10c0 1.100.900 2 2 2h9c.830 0 1.540-.500 1.840-1.220l3.020-7.050c.09-.230.140-.470.140-.730v-2z"/></svg><span style="letter-spacing:0.017px">Tillstyrkt</span></span></div></div>
<div id="foot"><span style="letter-spacing:0.346px">Visar 1–12 av 12 ansökningar</span></div>
</div>
</div>
</body>
</html>
